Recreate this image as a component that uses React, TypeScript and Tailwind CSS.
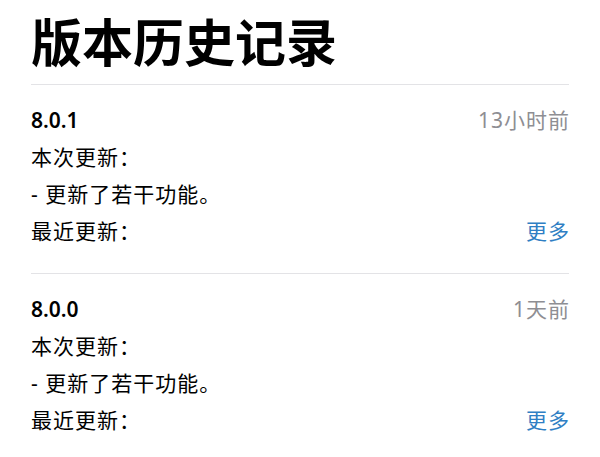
import React from "react";

const versions = [
  { v: "8.0.1", time: "13小时前" },
  { v: "8.0.0", time: "1天前" },
];

export default function App() {
  return (
    <div
      className="w-[600px] h-[457px] bg-white overflow-hidden px-[31px]"
      style={{ fontFamily: '"Noto Sans", "Noto Sans CJK SC", sans-serif' }}
    >
      <h1 className="pt-[12px] pb-[12px] text-[51px] leading-[60px] font-bold text-black">
        版本历史记录
      </h1>
      {versions.map((item) => (
        <div key={item.v} className="border-t border-[#e3e3e6] pt-[17px] pb-[23px]">
          <div className="flex items-center justify-between h-[37px]">
            <span className="text-[21px] font-semibold text-black">{item.v}</span>
            <span className="text-[21px] tracking-[1px] -mr-[1px] text-[#8e8e93]">{item.time}</span>
          </div>
          <div className="flex items-center h-[37px] text-[21px] tracking-[1px] text-black">本次更新：</div>
          <div className="flex items-center h-[37px] text-[21px] tracking-[1px] text-black">
            - 更新了若干功能。
          </div>
          <div className="flex items-center justify-between h-[37px]">
            <span className="text-[21px] tracking-[1px] text-black">最近更新：</span>
            <span className="text-[21px] tracking-[1px] -mr-[1px] text-[#2f7fc4]">更多</span>
          </div>
        </div>
      ))}
    </div>
  );
}
